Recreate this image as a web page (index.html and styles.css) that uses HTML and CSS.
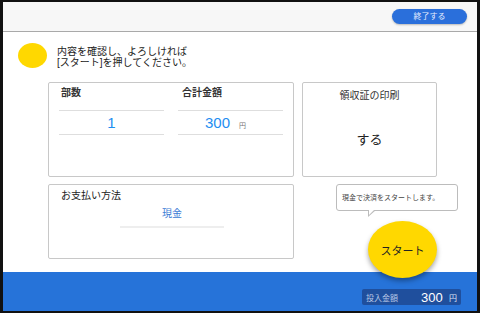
FILE: index.html
```html
<!DOCTYPE html>
<html lang="ja">
<head>
    <meta charset="UTF-8">
    <meta name="viewport" content="width=device-width, initial-scale=1.0">
    <title>確認</title>
    <link rel="stylesheet" href="styles.css">
</head>
<body>
    <div class="screen">
        <header class="top-bar">
            <button class="end-button">終了する</button>
        </header>

        <main class="content">
            <div class="message">
                <span class="dot"></span>
                <p>内容を確認し、よろしければ<br>[スタート]を押してください。</p>
            </div>

            <div class="cards">
                <div class="card order">
                    <div class="field">
                        <div class="field-label">部数</div>
                        <div class="field-value">1</div>
                    </div>
                    <div class="field">
                        <div class="field-label wide">合計金額</div>
                        <div class="field-value price">300<span class="yen">円</span></div>
                    </div>
                </div>

                <div class="card receipt">
                    <div class="receipt-title">領収証の印刷</div>
                    <div class="receipt-value">する</div>
                </div>

                <div class="card payment">
                    <div class="payment-title">お支払い方法</div>
                    <div class="payment-value">現金</div>
                </div>

                <div class="start-area">
                    <div class="bubble">現金で決済をスタートします。</div>
                    <button class="start-button">スタート</button>
                </div>
            </div>
        </main>

        <footer class="bottom-bar">
            <div class="inserted">
                <span class="inserted-label">投入金額</span>
                <span class="inserted-amount">300</span>
                <span class="inserted-yen">円</span>
            </div>
        </footer>
    </div>
</body>
</html>
```

FILE: styles.css
```css
body {
    margin: 0;
    background: #fff;
    font-family: "Liberation Sans", "Noto Sans CJK JP", sans-serif;
    color: #222;
}
.screen {
    width: 474px;
    border: solid #111;
    border-width: 2px 3px 2px 3px;
    display: flex;
    flex-direction: column;
}
.top-bar {
    height: 29px;
    background: #f7f7f7;
    border-bottom: 1px solid #a9a9a9;
    display: flex;
    justify-content: flex-end;
    align-items: flex-start;
    padding-right: 10px;
}
.end-button {
    margin-top: 7px;
    width: 75px;
    height: 15px;
    border: none;
    border-radius: 8px;
    background: #2a6fdb;
    color: #e8efff;
    font-family: inherit;
    font-size: 8px;
    line-height: 15px;
    padding: 0;
    box-shadow: 0 1px 2px rgba(0, 0, 0, 0.25);
}
.content {
    height: 240px;
    padding: 11px 0 0 15px;
    box-sizing: border-box;
}
.message {
    display: flex;
    align-items: flex-start;
    gap: 10px;
}
.dot {
    width: 29px;
    height: 25px;
    border-radius: 50%;
    background: #ffd800;
    flex-shrink: 0;
}
.message p {
    margin: 3px 0 0 0;
    font-size: 10px;
    line-height: 11px;
    color: #222;
}
.cards {
    margin: 14px 0 0 30px;
    display: grid;
    grid-template-columns: 246px 135px;
    grid-template-rows: 95px 75px;
    column-gap: 8px;
    row-gap: 7px;
}
.card {
    border: 1px solid #c8c8c8;
    border-radius: 2px;
    background: #fff;
    box-sizing: border-box;
}
.order {
    display: flex;
    gap: 14px;
    padding: 0 0 0 10px;
}
.field {
    width: 105px;
}
.field-label {
    height: 24px;
    padding: 3px 0 0 2px;
    font-size: 10px;
    line-height: 14px;
    font-weight: bold;
    color: #333;
    border-bottom: 1px solid #dedede;
}
.field-label.wide {
    padding-left: 4px;
}
.field-value {
    height: 23px;
    line-height: 23px;
    font-size: 15px;
    text-align: center;
    color: #1f8ef1;
    border-bottom: 1px solid #dedede;
}
.field-value.price {
    padding-right: 10px;
}
.yen {
    font-size: 7px;
    color: #777;
    margin-left: 9px;
}
.receipt {
    text-align: center;
}
.receipt-title {
    margin-top: 7px;
    font-size: 10px;
    line-height: 12px;
    color: #333;
}
.receipt-value {
    margin-top: 30px;
    font-size: 13px;
    line-height: 16px;
    color: #222;
}
.payment {
    padding: 4px 0 0 12px;
}
.payment-title {
    font-size: 10px;
    line-height: 13px;
    color: #222;
}
.payment-value {
    width: 104px;
    margin: 5px 0 0 59px;
    text-align: center;
    font-size: 10px;
    line-height: 14px;
    color: #3a7bd5;
    padding-bottom: 5px;
    border-bottom: 2px solid #eeeeee;
}
.start-area {
    display: flex;
    flex-direction: column;
    align-items: flex-start;
}
.bubble {
    position: relative;
    flex-shrink: 0;
    width: 122px;
    height: 27px;
    margin-left: 34px;
    box-sizing: border-box;
    border: 1px solid #bcbcbc;
    border-radius: 3px;
    background: #fff;
    font-size: 7px;
    line-height: 25px;
    padding-left: 5px;
    color: #444;
    white-space: nowrap;
}
.bubble::before,
.bubble::after {
    content: "";
    position: absolute;
    top: 100%;
    left: 31px;
    border-style: solid;
    border-width: 7px 8px 0 0;
    border-color: #bcbcbc transparent transparent transparent;
}
.bubble::after {
    top: calc(100% - 1px);
    left: 32px;
    border-width: 6px 6px 0 0;
    border-color: #fff transparent transparent transparent;
}
.start-button {
    position: relative;
    z-index: 1;
    flex-shrink: 0;
    margin: 10px 0 0 66px;
    width: 69px;
    height: 57px;
    border: none;
    border-radius: 50%;
    background: #ffd800;
    font-family: inherit;
    font-size: 11px;
    color: #222;
    padding: 0;
    box-shadow: 0 3px 5px rgba(0, 0, 0, 0.35);
}
.bottom-bar {
    height: 39px;
    background: #2673d9;
    display: flex;
    justify-content: flex-end;
    align-items: flex-end;
    padding: 0 16px 6px 0;
    box-sizing: border-box;
}
.inserted {
    width: 99px;
    height: 16px;
    background: #1f4f9d;
    border-radius: 2px;
    display: flex;
    align-items: center;
    padding-left: 4px;
    box-sizing: border-box;
}
.inserted-label {
    font-size: 8px;
    color: #b8c7e6;
    width: 55px;
}
.inserted-amount {
    font-size: 13px;
    color: #fff;
    width: 28px;
}
.inserted-yen {
    font-size: 8px;
    color: #dfe7f7;
}
```
